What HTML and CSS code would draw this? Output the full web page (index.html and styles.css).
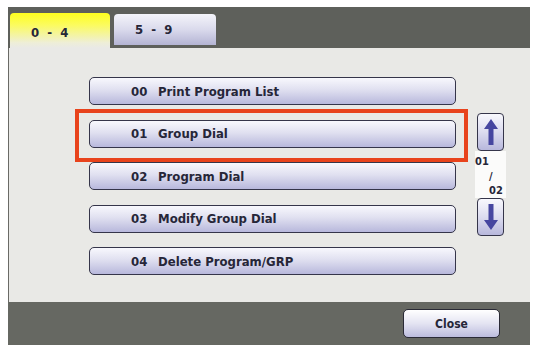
FILE: index.html
```
<!DOCTYPE html>
<html lang="en">
<head>
    <meta charset="UTF-8">
    <title>Program Dial</title>
    <link rel="stylesheet" href="styles.css">
</head>
<body>
    <div class="screen">
        <div class="tabbar">
            <div class="tab active">0 - 4</div>
            <div class="tab">5 - 9</div>
        </div>
        <div class="content">
            <div class="list">
                <div class="item"><span class="num">00</span>Print Program List</div>
                <div class="item highlight"><span class="num">01</span>Group Dial</div>
                <div class="item"><span class="num">02</span>Program Dial</div>
                <div class="item"><span class="num">03</span>Modify Group Dial</div>
                <div class="item"><span class="num">04</span>Delete Program/GRP</div>
            </div>
            <div class="scroller">
                <div class="arrow-btn">
                    <svg width="16" height="28" viewBox="0 0 16 28">
                        <path d="M8 1 L15 11 L10.5 11 L10.5 27 L5.5 27 L5.5 11 L1 11 Z" fill="#4646a0"/>
                    </svg>
                </div>
                <div class="pager">
                    <span class="page-cur">01</span>
                    <span class="page-sep">/</span>
                    <span class="page-max">02</span>
                </div>
                <div class="arrow-btn">
                    <svg width="16" height="28" viewBox="0 0 16 28">
                        <path d="M8 27 L15 17 L10.5 17 L10.5 1 L5.5 1 L5.5 17 L1 17 Z" fill="#4646a0"/>
                    </svg>
                </div>
            </div>
        </div>
        <div class="footer">
            <div class="close-btn">Close</div>
        </div>
    </div>
</body>
</html>
```
FILE: styles.css
```
body {
    margin: 0;
    background-color: #fff;
    font-family: "DejaVu Sans Condensed", "Liberation Sans", sans-serif;
    font-weight: bold;
    color: #262638;
}
.screen {
    margin: 7px 0 0 8px;
    width: 522px;
    height: 338px;
    display: flex;
    flex-direction: column;
    background-color: #5e605b;
}
.tabbar {
    height: 41px;
    display: flex;
    align-items: flex-end;
    gap: 4px;
    padding-left: 2px;
}
.tab {
    width: 102px;
    height: 31px;
    margin-bottom: 3px;
    box-sizing: border-box;
    padding: 8px 0 0 21px;
    font-size: 13px;
    word-spacing: 4px;
    border-radius: 4px 4px 0 0;
    background: linear-gradient(to bottom, #f4f4fa 0%, #dadaec 50%, #b4b4d4 100%);
}
.tab.active {
    width: 100px;
    height: 35px;
    margin-bottom: 0;
    padding-top: 12px;
    background: linear-gradient(to bottom, #ffff1e 0%, #fbfb60 35%, #eeeed8 85%, #e9e9e6 100%);
}
.content {
    flex: 1;
    display: flex;
    align-items: flex-start;
    gap: 20px;
    padding: 29px 0 0 80px;
    background-color: #e9e9e6;
    border-left: 1px solid #6a6a66;
}
.list {
    display: flex;
    flex-direction: column;
    gap: 14.5px;
}
.item {
    position: relative;
    width: 367px;
    height: 28px;
    box-sizing: border-box;
    display: flex;
    align-items: center;
    padding-left: 41px;
    font-size: 13px;
    border: 1.5px solid #35354a;
    border-radius: 5px;
    background: linear-gradient(to bottom, #f8f8fd 0%, #e0e0f0 45%, #b8b8dc 100%);
}
.num {
    width: 27px;
}
.highlight::after {
    content: "";
    position: absolute;
    left: -15px;
    right: -13px;
    top: -12px;
    bottom: -15px;
    border: 4px solid #e8431c;
}
.scroller {
    margin-top: 36px;
    display: flex;
    flex-direction: column;
    align-items: center;
    width: 29px;
}
.arrow-btn {
    width: 27px;
    height: 38px;
    box-sizing: border-box;
    display: flex;
    align-items: center;
    justify-content: center;
    border: 1.5px solid #35354a;
    border-radius: 4px;
    background: linear-gradient(to bottom, #f8f8fd 0%, #dcdcef 50%, #b8b8dc 100%);
}
.pager {
    width: 31px;
    height: 47px;
    position: relative;
    background-color: #fbfbfa;
    font-size: 11px;
    line-height: 1;
}
.page-cur {
    position: absolute;
    left: 0;
    top: 5px;
}
.page-sep {
    position: absolute;
    left: 14px;
    top: 20px;
}
.page-max {
    position: absolute;
    left: 14px;
    top: 34px;
}
.footer {
    height: 43px;
    display: flex;
    justify-content: flex-end;
    align-items: flex-start;
    padding: 7px 30px 0 0;
    box-sizing: border-box;
    background-color: #666862;
}
.close-btn {
    width: 97px;
    height: 29px;
    box-sizing: border-box;
    display: flex;
    align-items: center;
    justify-content: center;
    font-size: 12px;
    border: 1.5px solid #2a2a36;
    border-radius: 5px;
    background: linear-gradient(to bottom, #ffffff 0%, #e4e4f2 50%, #bcbcde 100%);
}
```
